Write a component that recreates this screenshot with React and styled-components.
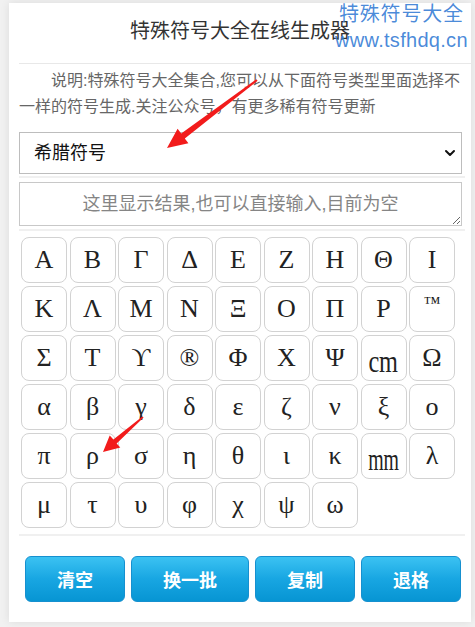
import React from "react";
import styled, { createGlobalStyle } from "styled-components";
import { ChevronDown } from "lucide-react";

const Global = createGlobalStyle`
  html, body { margin: 0; padding: 0; background: #f1f1f1; }
  body { font-family: "Liberation Sans", "Noto Sans CJK SC", sans-serif; }
  * { box-sizing: border-box; }
`;

const Page = styled.div`
  position: relative;
  width: 475px;
  height: 627px;
  padding: 3px 4px 5px 9px;
  overflow: hidden;
`;

const Card = styled.div`
  width: 462px;
  background: #fff;
  box-shadow: 0 0 9px rgba(0, 0, 0, 0.09);
  padding-left: 10px;
`;

const Title = styled.h1`
  margin: 0;
  padding: 16px 0 20px;
  line-height: 24px;
  font-size: 20px;
  font-weight: normal;
  color: #333;
  text-align: center;
  border-bottom: 1px solid #e8e8e8;
  padding-right: 10px;
`;

const Section = styled.div`
  margin-right: 6px;
  padding-top: ${(p) => p.$top || 0}px;
  padding-bottom: ${(p) => p.$bottom || 0}px;
  border-bottom: ${(p) => (p.$line ? "2px solid #f0f0f0" : "none")};
`;

const Desc = styled.p`
  margin: 0;
  text-indent: 2em;
  font-size: 16px;
  line-height: 26px;
  color: #666;
`;

const SelectWrap = styled.div`
  position: relative;
  width: 443px;
  margin-top: 12px;
`;

const Select = styled.select`
  appearance: none;
  -webkit-appearance: none;
  display: block;
  width: 100%;
  height: 42px;
  padding: 0 0 0 14px;
  border: 1px solid #bdbdbd;
  border-radius: 0;
  background: #fff;
  font-family: "Liberation Sans", "Noto Sans CJK SC", sans-serif;
  font-size: 18px;
  color: #111;
  outline: none;
`;

const Chevron = styled.span`
  position: absolute;
  right: 4px;
  top: 13px;
  pointer-events: none;
  display: flex;
  color: #111;
`;

const Result = styled.textarea`
  display: block;
  width: 443px;
  height: 44px;
  margin-top: 4px;
  padding: 8px 10px;
  border: 1px solid #c8c8c8;
  border-radius: 0;
  font-family: "Liberation Sans", "Noto Sans CJK SC", sans-serif;
  font-size: 18px;
  line-height: 26px;
  text-align: center;
  color: #333;
  outline: none;
  &::placeholder { color: #858585; }
`;

const Grid = styled.div`
  display: grid;
  grid-template-columns: repeat(9, 46px);
  grid-auto-rows: 46px;
  column-gap: 2.5px;
  row-gap: 3px;
  margin-left: 2px;
`;

const Sym = styled.button`
  display: flex;
  align-items: center;
  justify-content: center;
  padding: 0;
  border: 1px solid #d2d2d2;
  border-radius: 8px;
  background: #fff;
  font-family: "Liberation Serif", "DejaVu Serif", "Noto Sans CJK SC", serif;
  font-size: 26px;
  color: #222;
  line-height: 1;
  cursor: pointer;
`;

const Small = styled.span`
  display: inline-block;
  font-size: 17px;
  color: #111;
  transform: translateY(-7px);
`;

const Unit = styled.span`
  display: inline-block;
  font-family: "Liberation Serif", serif;
  font-size: 32px;
  letter-spacing: -0.5px;
  transform: scaleX(${(p) => p.$squeeze});
  margin-top: 5px;
`;

const Actions = styled.div`
  display: flex;
  gap: 6px;
  padding: 20px 0 20px 6px;
`;

const Action = styled.button`
  height: 46px;
  padding: 0 31px;
  border: 1px solid #1690cf;
  border-radius: 6px;
  background: linear-gradient(to bottom, #3bc2f2 0%, #18a6e2 50%, #0795d3 100%);
  font-family: "Liberation Sans", "Noto Sans CJK SC", sans-serif;
  font-size: 18px;
  font-weight: bold;
  color: #fff;
  cursor: pointer;
`;

const Mark = styled.div`
  position: absolute;
  top: 1px;
  left: 335px;
  width: 138px;
  display: flex;
  flex-direction: column;
  gap: 3px;
  color: rgba(58, 128, 214, 0.92);
  line-height: 24px;
  pointer-events: none;
  white-space: nowrap;
`;

const MarkName = styled.span`
  padding-left: 4px;
  font-family: "Noto Sans CJK SC", sans-serif;
  font-size: 20px;
  letter-spacing: 0.8px;
`;

const MarkUrl = styled.span`
  font-family: "Liberation Sans", sans-serif;
  font-size: 20px;
  letter-spacing: 0.3px;
`;

const Overlay = styled.svg`
  position: absolute;
  left: 0;
  top: 0;
  pointer-events: none;
`;

const rows = [
  ["Α", "Β", "Γ", "Δ", "Ε", "Ζ", "Η", "Θ", "Ι"],
  ["Κ", "Λ", "Μ", "Ν", "Ξ", "Ο", "Π", "Ρ", "™"],
  ["Σ", "Τ", "ϒ", "®", "Φ", "Χ", "Ψ", "㎝", "Ω"],
  ["α", "β", "γ", "δ", "ε", "ζ", "ν", "ξ", "ο"],
  ["π", "ρ", "σ", "η", "θ", "ι", "κ", "㎜", "λ"],
  ["μ", "τ", "υ", "φ", "χ", "ψ", "ω"],
];

const units = { "㎝": ["cm", 0.76], "㎜": ["mm", 0.62] };

function renderSymbol(s) {
  if (units[s]) {
    const [text, squeeze] = units[s];
    return (
      <Unit aria-label={s} $squeeze={squeeze}>
        {text}
      </Unit>
    );
  }
  if (s === "™") return <Small>{s}</Small>;
  return s;
}

export default function App() {
  return (
    <>
      <Global />
      <Page>
        <Card>
          <Title>特殊符号大全在线生成器</Title>
          <Section $top={4} $bottom={2} $line>
            <Desc>说明:特殊符号大全集合,您可以从下面符号类型里面选择不一样的符号生成.关注公众号，有更多稀有符号更新</Desc>
            <SelectWrap>
              <Select defaultValue="greek">
                <option value="greek">希腊符号</option>
              </Select>
              <Chevron>
                <ChevronDown size={16} strokeWidth={3} />
              </Chevron>
            </SelectWrap>
          </Section>
          <Section $bottom={3} $line>
            <Result placeholder="这里显示结果,也可以直接输入,目前为空" />
          </Section>
          <Section $top={6} $bottom={6} $line>
            <Grid>
              {rows.flat().map((s, i) => (
                <Sym key={i} title={s}>
                  {renderSymbol(s)}
                </Sym>
              ))}
            </Grid>
          </Section>
          <Actions>
            <Action>清空</Action>
            <Action>换一批</Action>
            <Action>复制</Action>
            <Action>退格</Action>
          </Actions>
        </Card>
        <Mark>
          <MarkName>特殊符号大全</MarkName>
          <MarkUrl>www.tsfhdq.cn</MarkUrl>
        </Mark>
        <Overlay width="475" height="627" viewBox="0 0 475 627">
          <polygon
            fill="#f21b1b"
            points="167,148 188.4,143.2 184.8,138.4 257.6,80.8 256.4,79.2 181.2,133.6 177.6,128.8"
          />
          <polygon
            fill="#f21b1b"
            points="103,452 120.3,447.5 116.6,443.4 143.6,417.6 142.4,416.4 113.4,439.6 109.7,435.5"
          />
        </Overlay>
      </Page>
    </>
  );
}
